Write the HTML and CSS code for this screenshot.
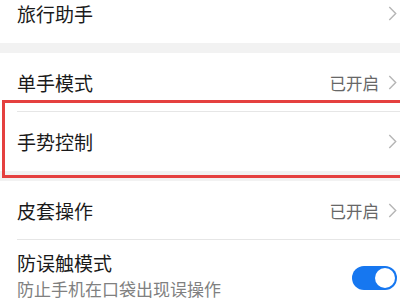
FILE: index.html
```html
<!DOCTYPE html>
<html lang="zh-CN">
<head>
<meta charset="utf-8">
<link rel="stylesheet" href="styles.css">
</head>
<body>
<div class="page">
  <div class="group first">
    <div class="row">
      <span class="title">旅行助手</span>
      <span class="right"><svg class="chev" viewBox="0 0 8 14"><path d="M1 1 L7 7 L1 13"/></svg></span>
    </div>
  </div>
  <div class="band"></div>
  <div class="group">
    <div class="row divided">
      <span class="title">单手模式</span>
      <span class="right"><span class="value">已开启</span><svg class="chev" viewBox="0 0 8 14"><path d="M1 1 L7 7 L1 13"/></svg></span>
    </div>
    <div class="row">
      <span class="title">手势控制</span>
      <span class="right"><svg class="chev" viewBox="0 0 8 14"><path d="M1 1 L7 7 L1 13"/></svg></span>
    </div>
  </div>
  <div class="band"></div>
  <div class="group">
    <div class="row divided">
      <span class="title">皮套操作</span>
      <span class="right"><span class="value">已开启</span><svg class="chev" viewBox="0 0 8 14"><path d="M1 1 L7 7 L1 13"/></svg></span>
    </div>
    <div class="row tall">
      <div class="texts">
        <span class="title">防误触模式</span>
        <span class="sub">防止手机在口袋出现误操作</span>
      </div>
      <span class="toggle"><span class="knob"></span></span>
    </div>
  </div>
  <div class="highlight"></div>
</div>
</body>
</html>
```
FILE: styles.css
```css
html, body {
  margin: 0;
  padding: 0;
  background: #ffffff;
}
body {
  width: 400px;
  height: 300px;
  overflow: hidden;
  font-family: "Noto Sans CJK SC", "Noto Sans", sans-serif;
}
.page {
  position: relative;
  width: 400px;
  height: 300px;
  overflow: hidden;
}
.group.first {
  margin-top: -16px;
}
.band {
  height: 10px;
  background: #f2f2f2;
}
.row {
  position: relative;
  height: 59px;
  padding-left: 17px;
  display: flex;
  align-items: center;
  justify-content: space-between;
  box-sizing: border-box;
}
.row.divided::after {
  content: "";
  position: absolute;
  left: 17px;
  right: 0;
  bottom: 0;
  height: 1px;
  background: #e6e6e6;
}
.row.tall {
  height: 76px;
  align-items: flex-start;
  padding-top: 10px;
}
.title {
  font-size: 19px;
  color: #1a1a1a;
  line-height: 26px;
}
.right {
  display: flex;
  align-items: center;
  padding-right: 3px;
}
.value {
  font-size: 16.5px;
  color: #676767;
  margin-right: 9px;
}
.chev {
  width: 9px;
  height: 15px;
  fill: none;
  stroke: #b5b5b5;
  stroke-width: 1.3;
}
.texts {
  display: flex;
  flex-direction: column;
}
.sub {
  font-size: 17px;
  color: #808080;
  line-height: 24px;
  margin-top: 1px;
}
.toggle {
  width: 45px;
  height: 24px;
  border-radius: 12px;
  background: #1677f0;
  margin-right: 3px;
  margin-top: 16px;
  display: flex;
  align-items: center;
  justify-content: flex-end;
  padding-right: 2px;
  box-sizing: border-box;
}
.knob {
  width: 20px;
  height: 20px;
  border-radius: 50%;
  background: #ffffff;
}
.highlight {
  position: absolute;
  left: 2px;
  top: 100px;
  width: 410px;
  height: 78px;
  border: 3px solid #e5403f;
  box-sizing: border-box;
}
```
